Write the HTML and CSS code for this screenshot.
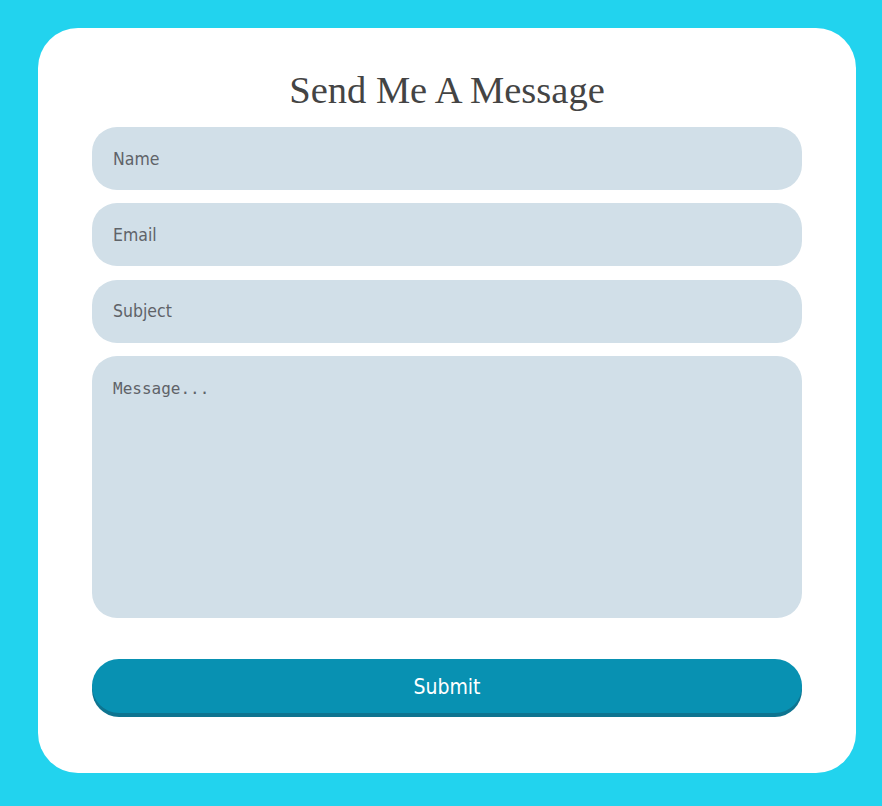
FILE: index.html
```html
<!DOCTYPE html>
<html lang="en">
<head>
<meta charset="utf-8">
<title>Contact</title>
<link rel="stylesheet" href="styles.css">
</head>
<body>
<main class="card">
  <h1 class="title">Send Me A Message</h1>
  <form class="form">
    <input class="field" type="text" placeholder="Name">
    <input class="field" type="email" placeholder="Email">
    <input class="field" type="text" placeholder="Subject">
    <textarea class="field area" placeholder="Message..."></textarea>
    <button class="submit" type="button">Submit</button>
  </form>
</main>
</body>
</html>
```
FILE: styles.css
```css
html, body {
  margin: 0;
  height: 100%;
}
body {
  background: #22d3ee;
  padding: 28px 26px 33px 38px;
  box-sizing: border-box;
}
.card {
  background: #ffffff;
  border-radius: 40px;
  height: 745px;
  box-sizing: border-box;
  padding: 41px 54px 0 54px;
}
.title {
  margin: 0 0 16px 0;
  text-align: center;
  font-family: "Liberation Serif", "Times New Roman", serif;
  font-weight: normal;
  font-size: 38.5px;
  line-height: 42px;
  color: #444444;
}
.form {
  display: flex;
  flex-direction: column;
  gap: 13.33px;
}
.field {
  display: block;
  width: 100%;
  box-sizing: border-box;
  height: 63px;
  border: none;
  outline: none;
  background: #d1dfe8;
  border-radius: 25px;
  padding: 0 21px;
  font-family: "DejaVu Sans Condensed", "DejaVu Sans", Verdana, sans-serif;
  font-stretch: condensed;
  font-size: 17.5px;
  color: #5f6368;
}
.field::placeholder {
  color: #5f6368;
  opacity: 1;
}
.area {
  height: 262px;
  resize: none;
  padding: 23px 21px 21px 21px;
  font-family: "DejaVu Sans Mono", monospace;
  font-stretch: normal;
  font-size: 16px;
  line-height: 19px;
}
.submit {
  margin-top: 27.67px;
  height: 54px;
  padding: 2px 0 0 0;
  border: none;
  border-radius: 27px;
  background: #0891b2;
  box-shadow: 0 4px 0 #0e7490;
  color: #ffffff;
  font-family: "DejaVu Sans Condensed", "DejaVu Sans", Verdana, sans-serif;
  font-stretch: condensed;
  font-size: 21px;
  cursor: pointer;
}
```
